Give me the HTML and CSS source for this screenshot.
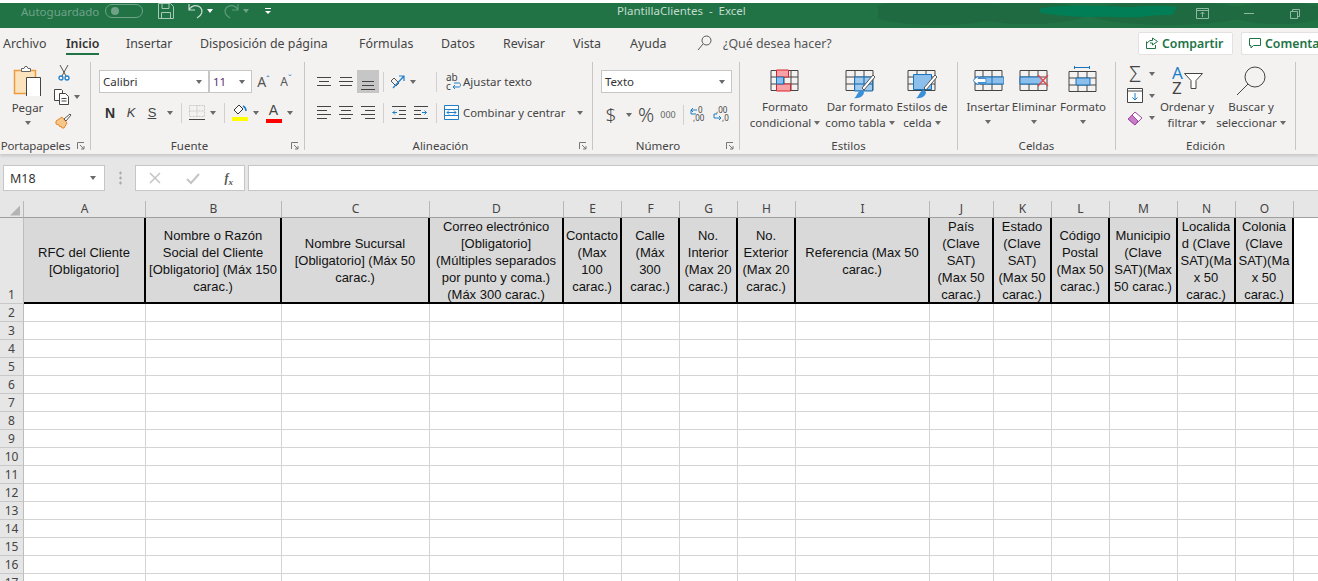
FILE: index.html
```html
<!DOCTYPE html>
<html lang="es">
<head>
<meta charset="utf-8">
<title>PlantillaClientes - Excel</title>
<link rel="stylesheet" href="styles.css">
</head>
<body>
<header class="titlebar">
  <svg class="blotch" width="440" height="25" viewBox="0 0 440 25"><g fill="#1f6a40"><ellipse cx="60" cy="9" rx="70" ry="13"/><ellipse cx="150" cy="10" rx="60" ry="11"/><ellipse cx="290" cy="10" rx="80" ry="12"/><ellipse cx="400" cy="10" rx="50" ry="11"/></g><path d="M163 5c30-4 60-2 90-1 20-1 30-2 45 0 2 2 0 3-3 4 3 2 1 3-2 4-14 0-24 1-30 2-30 1-30-1-50 0-20 0-35-2-50-4-2-2-2-3 0-5z" fill="#017e55"/></svg>
  <span class="autosave">Autoguardado</span>
  <span class="toggle"><i></i></span>
  <svg class="qa save" width="16" height="16" viewBox="0 0 16 16" fill="none" stroke="#a9c9b7"><path d="M.5.500h12l3 3v12H.5zM4 .5v5h7v-5M3.500 15.500v-6h9v6"/></svg>
  <svg class="qa undo" width="16" height="16" viewBox="0 0 16 16" fill="none" stroke="#c7dccf" stroke-width="1.200"><path d="M1 1v6h6M1 6.500C4 2 9 1.500 12.500 4.500 15.500 8 14 12 9 15"/></svg>
  <i class="cr white"></i>
  <svg class="qa redo" width="16" height="16" viewBox="0 0 16 16" fill="none" stroke="#5f9a7a" stroke-width="1.200"><path d="M15 1v6H9M15 6.500C12 2 7 1.500 3.500 4.500.5 8 2 12 7 15"/></svg>
  <i class="cr dim"></i>
  <span class="qat"><i class="cr white-s"></i></span>
  <span class="doc">PlantillaClientes &nbsp;-&nbsp; Excel</span>
  <svg class="win w1" width="13" height="11" viewBox="0 0 13 11" fill="none" stroke="#8fb8a2"><path d="M.5.500h12v10H.5zM.5 2.500h12M6.500 9V4M4.500 6l2-2 2 2"/></svg>
  <span class="win w2"></span>
  <svg class="win w3" width="10" height="10" viewBox="0 0 10 10" fill="none" stroke="#8fb8a2"><path d="M.5 2.500h7v7h-7zM2.500 2.500v-2h7v7h-2"/></svg>
</header>

<nav class="tabs">
  <span>Archivo</span><span class="on">Inicio</span><span>Insertar</span><span>Disposición de página</span><span>Fórmulas</span><span>Datos</span><span>Revisar</span><span>Vista</span><span>Ayuda</span>
  <svg width="15" height="16" viewBox="0 0 15 16" fill="none" stroke="#555"><circle cx="9.500" cy="5.500" r="4.500"/><path d="M6 9l-5 6"/></svg>
  <span class="ask">¿Qué desea hacer?</span>
  <span class="share"><svg width="12" height="12" viewBox="0 0 12 12" fill="none" stroke="#217346"><path d="M.5 4.500v7h9V8M.5 6.500L4 3.500h2.500V1L11.500 4.500 6.500 8V6H4"/></svg>Compartir</span>
  <span class="share note"><svg width="12" height="12" viewBox="0 0 12 12" fill="none" stroke="#217346"><path d="M.5 1.500h11v7H4.500L2 11V8.500H.5z"/></svg>Comentarios</span>
</nav>

<section class="ribbon">
  <div class="group g1">
    <div class="body clip">
      <div class="paste">
        <svg width="30" height="30" viewBox="0 0 30 30"><path d="M1.500 4.500h21v23h-21z" fill="#fbe3bd" stroke="#ed9b3f" stroke-width="1.500"/><path d="M8.500 2.500h2.500l1-2h2l1 2h2.500v3h-9z" fill="#fff" stroke="#666"/><path d="M13.500 11.500h14v19h-14z" fill="#fff" stroke="#444"/></svg>
        <span class="lbl">Pegar</span>
        <i class="cr"></i>
      </div>
      <div class="clipsmall">
        <svg width="12" height="16" viewBox="0 0 12 16" fill="none"><path d="M2 0l6 11M10 0L4 11" stroke="#555"/><circle cx="3" cy="13" r="2" stroke="#1e7ec8" stroke-width="1.300"/><circle cx="9" cy="13" r="2" stroke="#1e7ec8" stroke-width="1.300"/></svg>
        <div class="row"><svg width="16" height="16" viewBox="0 0 16 16" fill="#fff" stroke="#444"><path d="M.5.500h7l1 1v10h-8z"/><path d="M5.500 4.500h6l3 3v8h-9zM7.500 9.500h5M7.500 12h5" /></svg><i class="cr"></i></div>
        <svg width="17" height="16" viewBox="0 0 17 16"><path d="M1 8l6-4 5 6-3 5H7L6 13l-1 1-1-2-3-1z" fill="#f6c78a" stroke="#e8872a"/><path d="M9 6l6-5 1 1-5 6z" fill="#fff" stroke="#555"/></svg>
      </div>
    </div>
    <div class="label launched tight">Portapapeles<svg class="launch" width="8" height="8" viewBox="0 0 8 8" fill="none" stroke="#777"><path d="M.5 7V.5H7M3 3l4 4M7 4v3H4"/></svg></div>
  </div>

  <div class="group g2">
    <div class="body pad">
      <div class="line f1">
        <span class="select w110">Calibri<i class="cr"></i></span>
        <span class="select w43"><b class="purple">11</b><i class="cr"></i></span>
        <span class="grow">A<sup>ˆ</sup></span>
        <span class="shrink">A<sup>ˇ</sup></span>
      </div>
      <div class="line f2">
        <b class="fb">N</b><em class="fi">K</em><u class="fu">S</u><i class="cr"></i>
        <i class="sep"></i>
        <svg width="16" height="16" viewBox="0 0 16 16" fill="none"><path d="M.5.500h15v11H.5zM8 .5v11M.5 6h15" stroke="#c8c8c8" stroke-dasharray="2 1"/><path d="M0 14.500h16" stroke="#444"/></svg>
        <i class="cr"></i>
        <i class="sep"></i>
        <svg width="16" height="17" viewBox="0 0 16 17"><path d="M2 6l5-5 4 4-5 5z" fill="#fff" stroke="#333"/><path d="M11 2c2 1 3 3 3 5" fill="none" stroke="#1e7ec8" stroke-width="1.500"/><path d="M0 13h16v4H0z" fill="#ff0"/></svg>
        <i class="cr"></i>
        <span class="fc">A</span>
        <i class="cr"></i>
      </div>
    </div>
    <div class="label launched">Fuente<svg class="launch" width="8" height="8" viewBox="0 0 8 8" fill="none" stroke="#777"><path d="M.5 7V.5H7M3 3l4 4M7 4v3H4"/></svg></div>
  </div>

  <div class="group g3">
    <div class="body pad">
      <div class="line a1">
        <svg class="al" width="14" height="9" viewBox="0 0 14 9"><path d="M0 .5h14M2 4.500h10M0 8.500h14"/></svg>
        <svg class="al" width="14" height="9" viewBox="0 0 14 9"><path d="M1 .5h12M0 4.500h14M1 8.500h12"/></svg>
        <span class="active"><svg class="al" width="14" height="9" viewBox="0 0 14 9"><path d="M1 .5h12M1 4.500h12M0 8.500h14"/></svg></span>
        <i class="sep"></i>
        <svg width="16" height="15" viewBox="0 0 16 15" fill="none"><path d="M1 7l5 5 3-3-5-5z" stroke="#555"/><path d="M3 14L14 2M9 2h5v5" stroke="#1e7ec8" stroke-width="1.200"/></svg>
        <i class="cr left"></i>
        <i class="sep"></i>
        <span class="cmd wrap"><svg width="16" height="18" viewBox="0 0 16 18"><text x="0" y="8" class="svgt">ab</text><text x="0" y="17" class="svgt">c</text><path d="M7 14h6c2 0 2-4 0-4H8M9 12l-2 2 2 2" fill="none" stroke="#1e7ec8"/></svg>Ajustar texto</span>
      </div>
      <div class="line a2">
        <svg class="al" width="14" height="13" viewBox="0 0 14 13"><path d="M0 .5h14M0 4.500h10M0 8.500h14M0 12.500h10"/></svg>
        <svg class="al" width="14" height="13" viewBox="0 0 14 13"><path d="M0 .5h14M2 4.500h10M0 8.500h14M2 12.500h10"/></svg>
        <svg class="al" width="14" height="13" viewBox="0 0 14 13"><path d="M0 .5h14M4 4.500h10M0 8.500h14M4 12.500h10"/></svg>
        <i class="sep"></i>
        <svg class="al" width="14" height="13" viewBox="0 0 14 13"><path d="M0 .5h14M7 4.500h7M7 8.500h7M0 12.500h14"/><path d="M5 6.500H.5M3 4.500l-2 2 2 2" stroke="#1e7ec8" fill="none"/></svg>
        <svg class="al" width="14" height="13" viewBox="0 0 14 13"><path d="M0 .5h14M0 4.500h7M0 8.500h7M0 12.500h14"/><path d="M8 6.500h4.500M10.500 4.500l2 2-2 2" stroke="#1e7ec8" fill="none"/></svg>
        <i class="sep"></i>
        <span class="cmd merge"><svg width="15" height="15" viewBox="0 0 15 15" fill="#fff" stroke="#1e7ec8"><path d="M.5.500h14v14H.5zM.5 4.500h14M.5 10.500h14"/><path d="M3 7.500h9M5 5.500l-2 2 2 2M10 5.500l2 2-2 2" fill="none"/></svg>Combinar y centrar<i class="cr"></i></span>
      </div>
    </div>
    <div class="label launched">Alineación<svg class="launch" width="8" height="8" viewBox="0 0 8 8" fill="none" stroke="#777"><path d="M.5 7V.5H7M3 3l4 4M7 4v3H4"/></svg></div>
  </div>

  <div class="group g4">
    <div class="body pad">
      <div class="line"><span class="select w131">Texto<i class="cr"></i></span></div>
      <div class="line n2">
        <span class="big">$</span><i class="cr"></i><span class="pct">%</span><span class="mil">000</span><i class="sep"></i>
        <svg width="16" height="17" viewBox="0 0 16 17" fill="none"><text x="8" y="7" class="svgt tiny">0</text><text x="3" y="15" class="svgt tiny">,00</text><path d="M7 4H1M3 2L1 4l2 2M1 4v4h5" stroke="#1e7ec8"/></svg>
        <svg width="16" height="17" viewBox="0 0 16 17" fill="none"><text x="3" y="7" class="svgt tiny">,00</text><text x="9" y="15" class="svgt tiny">,0</text><path d="M1 12h7M6 10l2 2-2 2M1 12V8h3" stroke="#1e7ec8"/></svg>
      </div>
    </div>
    <div class="label launched">Número<svg class="launch" width="8" height="8" viewBox="0 0 8 8" fill="none" stroke="#777"><path d="M.5 7V.5H7M3 3l4 4M7 4v3H4"/></svg></div>
  </div>

  <div class="group g5">
    <div class="body big-row st">
      <div class="bigbtn">
        <svg width="30" height="30" viewBox="0 0 30 30"><path d="M1 1.500h27v20H1zM1 8h27M1 15h27M7 1v20M14 1v20M21 1v20" fill="none" stroke="#444"/><path d="M6.500 1h12v7h-12zM6.500 15h14v7h-14z" fill="#f9a1a6" stroke="#d8232a"/><path d="M6.500 8h7v7h-7z" fill="#8dbfec" stroke="#1773bb"/></svg>
        <span class="lbl">Formato<br>condicional<i class="cr in"></i></span>
      </div>
      <div class="bigbtn">
        <svg width="30" height="30" viewBox="0 0 30 30"><path d="M1 1.500h27v20H1zM1 8h27M1 15h27M10 1v20M19 1v20" fill="none" stroke="#444"/><path d="M9.500 8h18v14h-18z" fill="#8dbfec" fill-opacity=".8" stroke="#1773bb"/><path d="M10 15h18M19 8v14" stroke="#1773bb"/><path d="M17 19L28 6l2 2-11 13z" fill="#fff" stroke="#555"/><path d="M9 29c3-1 3-7 8-8l2 2c0 4-5 7-10 6z" fill="#3a8fd8"/></svg>
        <span class="lbl">Dar formato<br>como tabla<i class="cr in"></i></span>
      </div>
      <div class="bigbtn">
        <svg width="30" height="30" viewBox="0 0 30 30"><path d="M1 1.500h27v20H1zM1 8h27M1 15h27M10 1v20M19 1v20" fill="none" stroke="#444"/><path d="M6.500 5.500h18v15h-18z" fill="#8dbfec" stroke="#1773bb"/><path d="M17 19L28 6l2 2-11 13z" fill="#fff" stroke="#555"/><path d="M9 29c3-1 3-7 8-8l2 2c0 4-5 7-10 6z" fill="#3a8fd8"/></svg>
        <span class="lbl">Estilos de<br>celda<i class="cr in"></i></span>
      </div>
    </div>
    <div class="label">Estilos</div>
  </div>

  <div class="group g6">
    <div class="body big-row ce">
      <div class="bigbtn">
        <svg width="32" height="30" viewBox="0 0 32 30"><path d="M3 1.500h27v20H3zM3 8h27M3 15h27M11 1v20M20 1v20" fill="none" stroke="#444"/><path d="M8 8h24v7H8z" fill="#8dbfec" stroke="#1773bb"/><path d="M20 8v7" stroke="#1773bb"/><path d="M14 9.500H6V7L1 11.500 6 16v-2.500h8z" fill="#fff" stroke="#3a8fd8"/></svg>
        <span class="lbl">Insertar</span><i class="cr bl"></i>
      </div>
      <div class="bigbtn">
        <svg width="30" height="30" viewBox="0 0 30 30"><path d="M1 1.500h27v20H1zM1 8h27M1 15h27M10 1v20M19 1v20" fill="none" stroke="#444"/><path d="M1 8h19v7H1z" fill="#8dbfec" stroke="#1773bb"/><path d="M19 8l5 3.500-5 3.500z" fill="#8dbfec"/><path d="M19 6l10 11M29 6L19 17" stroke="#e8414a" stroke-width="1.300"/></svg>
        <span class="lbl">Eliminar</span><i class="cr bl"></i>
      </div>
      <div class="bigbtn fmt">
        <svg width="30" height="33" viewBox="0 0 30 33"><path d="M6 1.500h16M6.500 0v3M21.500 0v3" stroke="#1773bb" fill="none"/><path d="M1 5.500h27v20H1zM1 12h27M1 19h27M10 5v20M19 5v20" fill="none" stroke="#444"/><path d="M8 12h14v7H8z" fill="#8dbfec" stroke="#1773bb"/></svg>
        <span class="lbl">Formato</span><i class="cr bl"></i>
      </div>
    </div>
    <div class="label">Celdas</div>
  </div>

  <div class="group g7">
    <div class="body big-row ed">
      <div class="edsmall">
        <div class="row"><span class="sigma">Σ</span><i class="cr"></i></div>
        <div class="row"><svg width="16" height="15" viewBox="0 0 16 15" fill="#fff" stroke="#444"><path d="M.5.500h15v14H.5z"/><path d="M.5 3h15" fill="none"/><path d="M8 5v7M5.500 9.500L8 12l2.500-2.500" fill="none" stroke="#1e7ec8"/></svg><i class="cr"></i></div>
        <div class="row"><svg width="16" height="16" viewBox="0 0 16 16"><path d="M1 9l7-7 7 6-7 7z" fill="#fff" stroke="#a349a4"/><path d="M1 9l4-4 6 6-3 4z" fill="#c77dc8" stroke="#a349a4"/></svg><i class="cr"></i></div>
      </div>
      <div class="bigbtn sort">
        <svg width="31" height="28" viewBox="0 0 31 28"><text x="0" y="13" class="svgt az blue">A</text><text x="0" y="28" class="svgt az">Z</text><path d="M12.500 7.500h18l-6.500 7v8h-5v-8z" fill="#fff" stroke="#444"/></svg>
        <span class="lbl">Ordenar y<br>filtrar<i class="cr in"></i></span>
      </div>
      <div class="bigbtn find">
        <svg width="30" height="30" viewBox="0 0 30 30" fill="none" stroke="#444"><circle cx="19" cy="11" r="10"/><path d="M12 18L1 29"/></svg>
        <span class="lbl">Buscar y<br>seleccionar<i class="cr in"></i></span>
      </div>
    </div>
    <div class="label">Edición</div>
  </div>
</section>

<section class="formula">
  <div class="namebox">M18<i class="cr"></i></div>
  <span class="dots"></span>
  <div class="fxbox">
    <svg width="14" height="14" viewBox="0 0 14 14" fill="none" stroke="#c4c4c4" stroke-width="1.500"><path d="M2 2l10 10M12 2L2 12"/></svg>
    <svg width="14" height="14" viewBox="0 0 14 14" fill="none" stroke="#c4c4c4" stroke-width="2"><path d="M1 8l4 4 8-9"/></svg>
    <span class="fx">f<sub>x</sub></span>
  </div>
  <div class="finput"></div>
</section>

<table class="sheet">
  <colgroup><col class="c-r"><col class="c-a"><col class="c-b"><col class="c-c"><col class="c-d"><col class="c-n"><col class="c-n"><col class="c-n"><col class="c-n"><col class="c-d"><col class="c-j"><col class="c-n"><col class="c-n"><col class="c-m"><col class="c-n"><col class="c-n"><col class="c-j"></colgroup>
  <thead><tr><th class="corner"><i></i></th><th>A</th><th>B</th><th>C</th><th>D</th><th>E</th><th>F</th><th>G</th><th>H</th><th>I</th><th>J</th><th>K</th><th>L</th><th>M</th><th>N</th><th>O</th><th class="last"></th></tr></thead>
  <tbody>
    <tr class="r1"><th>1</th>
      <td class="h"><div>RFC del Cliente<br>[Obligatorio]</div></td>
      <td class="h"><div>Nombre o Razón<br>Social del Cliente<br>[Obligatorio] (Máx 150<br>carac.)</div></td>
      <td class="h"><div>Nombre Sucursal<br>[Obligatorio] (Máx 50<br>carac.)</div></td>
      <td class="h"><div>Correo electrónico<br>[Obligatorio]<br>(Múltiples separados<br>por punto y coma.)<br>(Máx 300 carac.)</div></td>
      <td class="h"><div>Contacto<br>(Max<br>100<br>carac.)</div></td>
      <td class="h"><div>Calle<br>(Máx<br>300<br>carac.)</div></td>
      <td class="h"><div>No.<br>Interior<br>(Max 20<br>carac.)</div></td>
      <td class="h"><div>No.<br>Exterior<br>(Max 20<br>carac.)</div></td>
      <td class="h"><div>Referencia (Max 50<br>carac.)</div></td>
      <td class="h"><div>País<br>(Clave<br>SAT)<br>(Max 50<br>carac.)</div></td>
      <td class="h"><div>Estado<br>(Clave<br>SAT)<br>(Max 50<br>carac.)</div></td>
      <td class="h"><div>Código<br>Postal<br>(Max 50<br>carac.)</div></td>
      <td class="h"><div>Municipio<br>(Clave<br>SAT)(Max<br>50 carac.)</div></td>
      <td class="h"><div>Localida<br>d (Clave<br>SAT)(Ma<br>x 50<br>carac.)</div></td>
      <td class="h"><div>Colonia<br>(Clave<br>SAT)(Ma<br>x 50<br>carac.)</div></td>
      <td></td></tr>
    <tr><th>2</th><td></td><td></td><td></td><td></td><td></td><td></td><td></td><td></td><td></td><td></td><td></td><td></td><td></td><td></td><td></td><td></td></tr>
    <tr><th>3</th><td></td><td></td><td></td><td></td><td></td><td></td><td></td><td></td><td></td><td></td><td></td><td></td><td></td><td></td><td></td><td></td></tr>
    <tr><th>4</th><td></td><td></td><td></td><td></td><td></td><td></td><td></td><td></td><td></td><td></td><td></td><td></td><td></td><td></td><td></td><td></td></tr>
    <tr><th>5</th><td></td><td></td><td></td><td></td><td></td><td></td><td></td><td></td><td></td><td></td><td></td><td></td><td></td><td></td><td></td><td></td></tr>
    <tr><th>6</th><td></td><td></td><td></td><td></td><td></td><td></td><td></td><td></td><td></td><td></td><td></td><td></td><td></td><td></td><td></td><td></td></tr>
    <tr><th>7</th><td></td><td></td><td></td><td></td><td></td><td></td><td></td><td></td><td></td><td></td><td></td><td></td><td></td><td></td><td></td><td></td></tr>
    <tr><th>8</th><td></td><td></td><td></td><td></td><td></td><td></td><td></td><td></td><td></td><td></td><td></td><td></td><td></td><td></td><td></td><td></td></tr>
    <tr><th>9</th><td></td><td></td><td></td><td></td><td></td><td></td><td></td><td></td><td></td><td></td><td></td><td></td><td></td><td></td><td></td><td></td></tr>
    <tr><th>10</th><td></td><td></td><td></td><td></td><td></td><td></td><td></td><td></td><td></td><td></td><td></td><td></td><td></td><td></td><td></td><td></td></tr>
    <tr><th>11</th><td></td><td></td><td></td><td></td><td></td><td></td><td></td><td></td><td></td><td></td><td></td><td></td><td></td><td></td><td></td><td></td></tr>
    <tr><th>12</th><td></td><td></td><td></td><td></td><td></td><td></td><td></td><td></td><td></td><td></td><td></td><td></td><td></td><td></td><td></td><td></td></tr>
    <tr><th>13</th><td></td><td></td><td></td><td></td><td></td><td></td><td></td><td></td><td></td><td></td><td></td><td></td><td></td><td></td><td></td><td></td></tr>
    <tr><th>14</th><td></td><td></td><td></td><td></td><td></td><td></td><td></td><td></td><td></td><td></td><td></td><td></td><td></td><td></td><td></td><td></td></tr>
    <tr><th>15</th><td></td><td></td><td></td><td></td><td></td><td></td><td></td><td></td><td></td><td></td><td></td><td></td><td></td><td></td><td></td><td></td></tr>
    <tr><th>16</th><td></td><td></td><td></td><td></td><td></td><td></td><td></td><td></td><td></td><td></td><td></td><td></td><td></td><td></td><td></td><td></td></tr>
    <tr><th>17</th><td></td><td></td><td></td><td></td><td></td><td></td><td></td><td></td><td></td><td></td><td></td><td></td><td></td><td></td><td></td><td></td></tr>
  </tbody>
</table>
</body>
</html>
```
FILE: styles.css
```css
* { box-sizing: border-box; }
html, body { margin: 0; height: 581px; overflow: hidden; }
body {
  width: 1318px;
  padding-top: 3px;
  background: #e6e6e6;
  font-family: "Noto Sans", "Open Sans", sans-serif;
  font-size: 11.5px;
  color: #444;
  box-shadow: inset 0 3px 0 #fff;
}
i { font-style: normal; }

/* title bar */
.titlebar { position: relative; display: flex; align-items: center; height: 25px; padding: 0 0 9px 21px; background: #217346; overflow: hidden; }
.blotch { position: absolute; left: 878px; top: 0; }
.autosave { position: relative; width: 84px; font-size: 11.5px; color: #6fa287; }
.toggle { position: relative; display: flex; align-items: center; width: 38px; height: 14px; padding-left: 5px; border: 1px solid #6fa287; border-radius: 7px; }
.toggle i { width: 8px; height: 8px; border-radius: 50%; background: #6fa287; }
.qa { flex: none; }
.save { margin-left: 15px; }
.undo { margin-left: 14px; }
.redo { margin-left: 10px; }
.qat { display: flex; flex-direction: column; align-items: center; width: 6px; margin-left: 16px; border-top: 1px solid #fff; padding-top: 2px; }
.cr { display: inline-block; flex: none; width: 0; height: 0; border: 3.5px solid transparent; border-top: 4px solid #6a6a6a; border-bottom: 0; }
.cr.white { margin-left: 3px; border-top-color: #fff; }
.cr.white-s { border-width: 3px 3px 0; border-top-color: #fff; }
.cr.dim { margin-left: 4px; border-top-color: #6fa287; }
.doc { position: absolute; left: 617px; top: 0; font-size: 11.5px; line-height: 16px; color: #c3dccd; white-space: pre; }
.win { position: absolute; top: 5px; }
.w1 { left: 1196px; }
.w2 { left: 1244px; top: 10px; width: 10px; height: 1px; background: #8fb8a2; }
.w3 { left: 1290px; top: 6px; }

/* tabs */
.tabs { display: grid; grid-template-columns: 63px 60px 74px 159px 82px 62px 70px 57px 67px 26px 415px 103px 80px; align-items: center; height: 32px; padding: 0 0 2px 3px; background: #f3f2f1; font-size: 12.4px; white-space: nowrap; overflow: hidden; color: #444; }
.tabs .on { position: relative; align-self: stretch; display: flex; align-items: center; width: 33px; font-weight: 600; color: #333; }
.tabs .on::after { content: ""; position: absolute; left: 0; right: 0; bottom: 3px; height: 2px; background: #217346; }
.tabs svg { flex: none; }
.ask { color: #555; }
.share { display: flex; align-items: center; gap: 4px; width: 95px; height: 23px; padding-left: 7px; background: #fff; border: 1px solid #e3e2e1; border-radius: 2px; font-weight: 600; font-size: 12.3px; color: #217346; }
.note { width: 90px; border-right: 0; }

/* ribbon */
.ribbon { position: relative; display: grid; grid-template-columns: 91px 214px 288px 147px 218px 158px 180px; height: 94px; padding: 2px 0 4px; background: #f3f2f1; box-shadow: 0 2px 3px rgba(0, 0, 0, .14); }
.group { position: relative; display: flex; flex-direction: column; height: 88px; border-right: 1px solid #c8c6c4; }
.body { flex: 1; min-height: 0; white-space: nowrap; }
.label { position: relative; height: 16px; line-height: 23px; font-size: 11.5px; text-align: center; }
.launched { padding-right: 16px; }
.tight { padding-right: 19px; letter-spacing: -.15px; }
.launch { position: absolute; right: 5px; top: 8px; }

.clip { display: grid; grid-template-columns: 47px 40px; padding-left: 4px; }
.paste { display: flex; flex-direction: column; align-items: center; padding-top: 4px; }
.paste svg { margin-bottom: 4px; }
.lbl { display: block; line-height: 16px; text-align: center; white-space: nowrap; }
.paste .cr { margin-top: 5px; }
.clipsmall { display: flex; flex-direction: column; align-items: flex-start; gap: 8px; padding: 3px 0 0 3px; }
.clipsmall > svg:first-child { margin-left: 4px; }
.clipsmall > svg:last-child { margin-left: 1px; }
.row { display: flex; align-items: center; gap: 4px; }

.pad { display: flex; flex-direction: column; gap: 8px; padding: 8px 0 0 8px; }
.line { display: grid; align-items: center; justify-items: center; height: 23px; }
.f1 { grid-template-columns: 110px 44px 21px 24px; }
.f2 { grid-template-columns: 22px 20px 22px 14px 9px 21px 12px 10px 22px 10px 25px 8px; }
.a1 { grid-template-columns: 22px 22px 22px 9px 20px 23px 10px auto; }
.a2 { grid-template-columns: 22px 22px 22px 9px 22px 22px 8px auto; }
.n2 { grid-template-columns: 20px 16px 18px 26px 5px 24px 22px; }
.line:not([class*=" "]) { display: flex; }

.select { display: flex; align-items: center; justify-content: space-between; justify-self: start; height: 23px; padding: 0 6px 0 3px; background: #fff; border: 1px solid #c6c6c6; color: #333; font-size: 11.5px; }
.w110 { width: 110px; }
.w43 { width: 43px; }
.w131 { width: 131px; }
.purple { font-weight: 400; color: #5c2d73; }
.grow, .shrink { font-size: 14px; color: #555; }
.grow sup, .shrink sup { font-size: 9px; line-height: 0; vertical-align: 4px; color: #1e7ec8; }
.shrink { font-size: 12px; }
.fb { font-size: 14px; color: #333; font-family: "Liberation Sans", sans-serif; }
.fi { font-size: 13px; font-family: "Liberation Sans", sans-serif; }
.fu { font-size: 13px; font-family: "Liberation Sans", sans-serif; }
.fc { font-size: 14px; line-height: 14px; padding-bottom: 2px; border-bottom: 4px solid #f00; width: 16px; text-align: center; font-family: "Liberation Sans", sans-serif; }
.sep { width: 1px; height: 20px; background: #d2d0ce; }
.al { stroke: #444; fill: none; }
.active { display: flex; align-items: flex-end; justify-content: center; width: 22px; height: 23px; padding-bottom: 3px; background: #c6c6c6; }
.cr.left { justify-self: start; margin-left: 2px; }
.cmd { display: flex; align-items: center; justify-self: start; }
.wrap { padding-left: 5px; gap: 1px; }
.merge { padding-left: 4px; gap: 4px; font-size: 11.3px; }
.merge .cr { margin-left: 8px; }
.svgt { font: 10px "Noto Sans", sans-serif; fill: #444; stroke: none; }
.tiny { font-size: 8px; }
.az { font-size: 17px; }
.blue { fill: #1e7ec8; }
.big { font-size: 19px; font-weight: 300; }
.pct { font-size: 20px; font-weight: 300; }
.mil { font-size: 9px; color: #666; }

.big-row { display: grid; align-items: start; padding-top: 7px; }
.st { grid-template-columns: 80px 70px 54px; padding-left: 5px; }
.ce { grid-template-columns: 48px 44px 54px; padding-left: 6px; }
.ed { grid-template-columns: 34px 58px 70px; padding: 0 0 0 8px; }
.bigbtn { display: flex; flex-direction: column; align-items: center; }
.bigbtn svg { display: block; }
.cr.in { margin-left: 3px; vertical-align: 2px; }
.cr.bl { margin-top: 5px; }
.fmt { margin-top: -3px; }
.sort { padding-top: 4px; }
.sort svg { margin-bottom: 5px; }
.find { padding-top: 4px; }
.find svg { margin-bottom: 3px; }
.edsmall { display: flex; flex-direction: column; gap: 1px; padding: 1px 0 0 3px; }
.edsmall .row { height: 21px; gap: 6px; }
.sigma { width: 16px; font-size: 21px; font-weight: 300; line-height: 20px; text-align: center; color: #444; }

/* formula bar */
.formula { display: flex; align-items: stretch; height: 26px; margin-top: 11px; padding-left: 3px; }
.namebox { display: flex; align-items: center; justify-content: space-between; width: 102px; padding: 0 8px 0 6px; background: #fff; border: 1px solid #c6c6c6; font-size: 12.5px; color: #333; }
.dots { width: 30px; background: radial-gradient(circle, #aaa 1px, transparent 1.500px) center / 3px 5px repeat-y; background-clip: content-box; padding: 5px 0; }
.fxbox { display: flex; align-items: center; justify-content: space-between; width: 110px; padding: 0 11px 0 12px; background: #fff; border: 1px solid #c6c6c6; }
.fx { font: italic 700 12px "Liberation Serif", serif; color: #555; }
.fx sub { font-size: 9px; line-height: 0; }
.finput { flex: 1; margin-left: 3px; background: #fff; border: 1px solid #c6c6c6; border-right: 0; }

/* sheet */
.sheet { margin-top: 10px; table-layout: fixed; width: 1358px; border-collapse: separate; border-spacing: 0; }
.c-r { width: 24px; }
.c-a { width: 122px; }
.c-b { width: 136px; }
.c-c { width: 148px; }
.c-d { width: 134px; }
.c-n { width: 58px; }
.c-j { width: 64px; }
.c-m { width: 68px; }
.sheet th { padding: 0; background: #e6e6e6; font-weight: 400; font-size: 12px; color: #444; border-right: 1px solid #bdbdbd; border-bottom: 1px solid #c8c8c8; }
.sheet thead th { height: 17px; line-height: 14px; border-bottom-color: #9f9f9f; border-right-color: #b8b8b8; }
.corner { text-align: right; }
.corner i { display: block; width: 10px; height: 10px; margin: 3px 3px 0 auto; background: #b4b4b4; clip-path: polygon(100% 0, 100% 100%, 0 100%); }
.sheet tbody th { height: 18px; line-height: 16px; }
.sheet td { padding: 0; background: #fff; border-right: 1px solid #d4d4d4; border-bottom: 1px solid #d4d4d4; }
.r1 th { vertical-align: bottom; }
.sheet .h { background: #d9d9d9; border-right: 2px solid #000; border-bottom: 2px solid #000; font: 13px/17px "Liberation Sans", Arial, sans-serif; color: #111; text-align: center; }
.h div { display: flex; flex-direction: column; justify-content: center; height: 84px; padding-top: 1px; white-space: nowrap; overflow: visible; }
```
